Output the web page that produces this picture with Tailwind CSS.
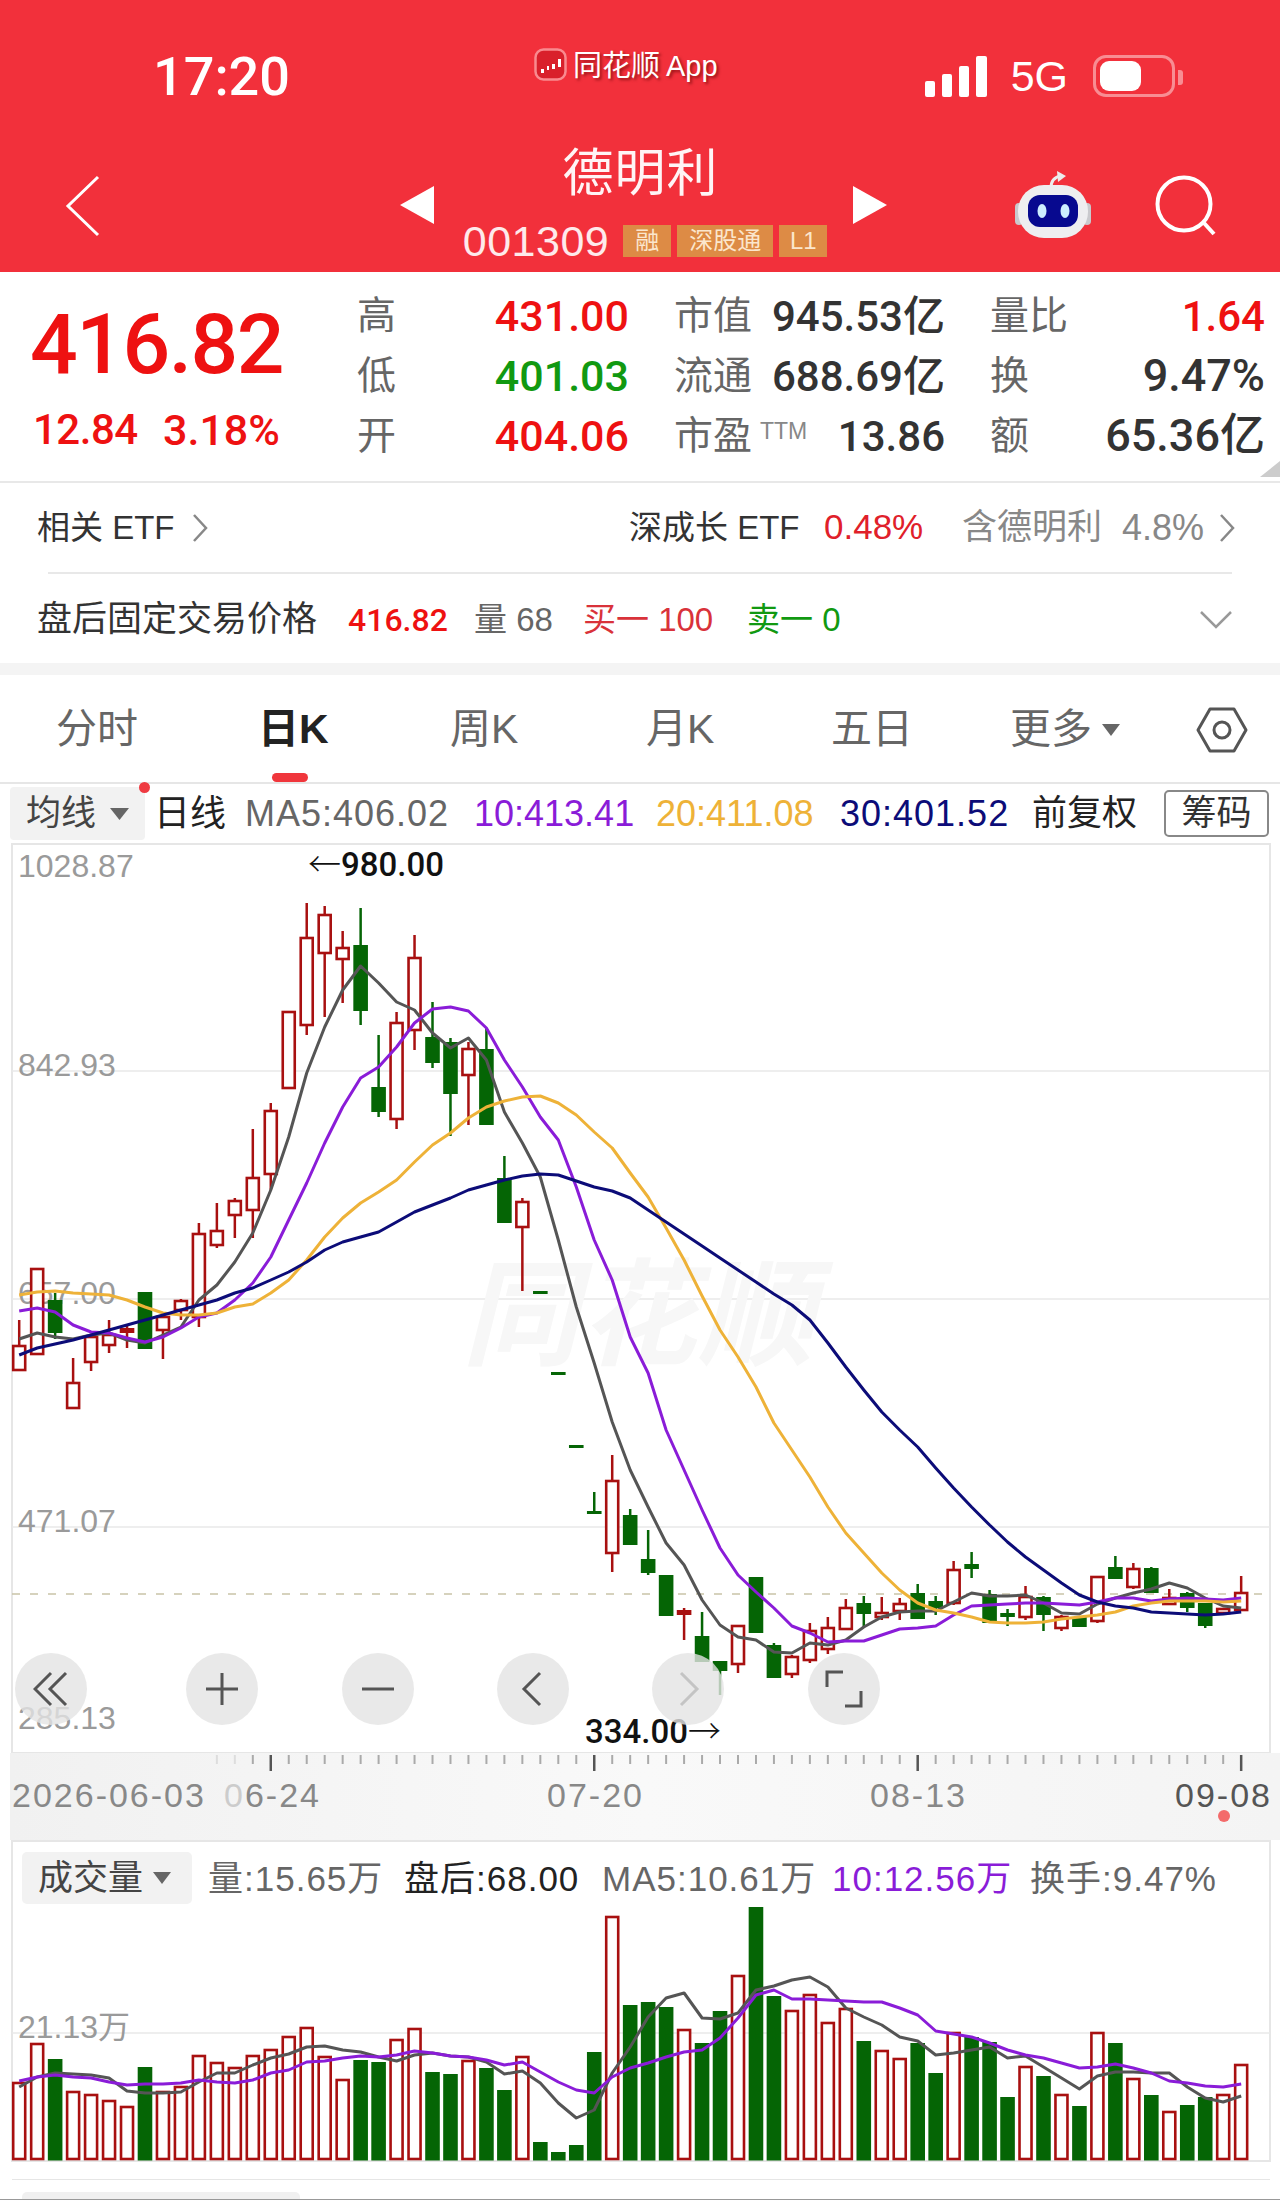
<!DOCTYPE html>
<html lang="zh-CN">
<head>
  <meta charset="UTF-8" />
  <meta name="viewport" content="width=device-width, initial-scale=1.0" />
  <title>德明利 001309</title>
  <script src="https://cdn.jsdelivr.net/npm/@tailwindcss/browser@4"></script>
</head>
<body class="w-[1280px] bg-white text-[#333] [font-family:'Liberation_Sans','Noto_Sans_CJK_SC',sans-serif]">

  <!-- Red header -->
  <header class="h-[272px] bg-[#f2303b] text-white">
    <div class="flex h-[140px] items-start">
      <div class="ml-[153px] mt-[50px] w-[140px] text-[54px] leading-[54px] font-medium [font-family:'Roboto','Liberation_Sans',sans-serif]">17:20</div>
      <div class="ml-[241px] mt-[48px] flex h-[32px] items-center">
        <svg width="33" height="33" viewBox="0 0 33 33">
          <rect x="1.5" y="1.5" width="30" height="30" rx="8" fill="#d9202b" stroke="#f98a8f" stroke-width="2.5"/>
          <path d="M7 21h3v4H7zM13 18h2v4h-2zM18 16h3v5h-3zM24 11h3v8h-3z" fill="#fff"/>
        </svg>
        <span class="ml-[6px] mt-[4px] text-[29px] leading-[32px] whitespace-nowrap [text-shadow:2px_2px_3px_rgba(90,0,0,.6)]">同花顺</span>
        <span class="ml-[6px] mt-[4px] text-[29px] leading-[32px] [text-shadow:2px_2px_3px_rgba(90,0,0,.6)]">App</span>
      </div>
      <div class="ml-[207px] mt-[55px] flex h-[42px] items-end">
        <div class="flex items-end gap-[7px]">
          <div class="h-[16px] w-[10px] rounded-[2px] bg-white"></div>
          <div class="h-[23px] w-[10px] rounded-[2px] bg-white"></div>
          <div class="h-[31px] w-[10px] rounded-[2px] bg-white"></div>
          <div class="h-[41px] w-[11px] rounded-[2px] bg-white"></div>
        </div>
        <div class="ml-[24px] w-[58px] text-[43px] leading-[41px]">5G</div>
        <div class="ml-[24px] flex h-[42px] w-[82px] items-center rounded-[13px] border-[3px] border-white/45 pl-[4px]">
          <div class="h-[30px] w-[41px] rounded-[9px] bg-white"></div>
        </div>
        <div class="mb-[12px] ml-[3px] h-[15px] w-[5px] rounded-r-[3px] bg-white/45"></div>
      </div>
    </div>
    <div class="flex h-[132px] items-start">
      <svg class="ml-[65px] mt-[35px]" width="36" height="62" viewBox="0 0 36 62">
        <path d="M33 2 3 31l30 29" fill="none" stroke="#fff" stroke-width="3"/>
      </svg>
      <svg class="ml-[299px] mt-[46px]" width="34" height="38" viewBox="0 0 34 38"><path d="M34 0v38L0 19z" fill="#fff"/></svg>
      <div class="flex w-[419px] flex-col items-center">
        <div class="mr-[6px] mt-[7px] text-[51px] leading-[54px] tracking-[1px] text-white/95">德明利</div>
        <div class="ml-[3px] mt-[24px] flex h-[32px] items-center">
          <span class="mr-[14px] text-[43px] leading-[32px] tracking-[.5px] text-white/90">001309</span>
          <span class="flex h-[32px] w-[48px] items-center justify-center bg-[#dd8b45] text-[24px] text-[#fbe6cd]">融</span>
          <span class="ml-[6px] flex h-[32px] w-[96px] items-center justify-center bg-[#dd8b45] text-[24px] text-[#fbe6cd]">深股通</span>
          <span class="ml-[6px] flex h-[32px] w-[48px] items-center justify-center bg-[#dd8b45] text-[24px] text-[#fbe6cd]">L1</span>
        </div>
      </div>
      <svg class="mt-[46px]" width="34" height="38" viewBox="0 0 34 38"><path d="M0 0v38l34-19z" fill="#fff"/></svg>
      <svg class="ml-[128px] mt-[30px]" width="78" height="70" viewBox="0 0 78 70">
        <path d="M36 18c0-6 3-11 10-12" fill="none" stroke="#ececec" stroke-width="3"/>
        <path d="M42 1l9 5-8 6z" fill="#ececec"/>
        <rect x="0" y="33" width="8" height="22" rx="4" fill="#c9c9cd"/>
        <rect x="68" y="33" width="8" height="22" rx="4" fill="#c9c9cd"/>
        <rect x="3" y="15" width="70" height="53" rx="26" fill="#eeeef0"/>
        <rect x="13" y="25" width="50" height="32" rx="12" fill="#07098f"/>
        <ellipse cx="27" cy="41" rx="4.5" ry="7" fill="#cdeeff"/>
        <ellipse cx="50" cy="41" rx="4.5" ry="7" fill="#cdeeff"/>
      </svg>
      <svg class="ml-[62px] mt-[32px]" width="64" height="66" viewBox="0 0 64 66">
        <circle cx="29" cy="32" r="26.5" fill="none" stroke="#fff" stroke-width="4"/>
        <path d="M49 51l10 11" stroke="#fff" stroke-width="4" fill="none"/>
      </svg>
    </div>
  </header>

  <!-- Quote -->
  <section class="relative flex h-[211px] border-b-2 border-[#e8e8e8]">
    <div class="ml-[30px] w-[327px]">
      <div class="mt-[34px] text-[84px] leading-[78px] tracking-[-1.5px] font-medium text-[#ee1111] [font-family:'Roboto','Liberation_Sans',sans-serif]">416.82</div>
      <div class="mt-[26px] flex text-[42px] leading-[40px] font-medium text-[#ee1111] [font-family:'Roboto','Liberation_Sans',sans-serif]">
        <span class="ml-[3px] w-[130px] tracking-[-.5px]">12.84</span><span class="text-[43px]">3.18%</span>
      </div>
    </div>
    <div class="mt-[14px] grid h-[180px] grid-cols-[272px_271px_275px] grid-rows-[60px_60px_60px] gap-x-[45px] text-[39px] text-[#666]">
      <div class="flex items-center justify-between"><span>高</span><span class="text-[43px] font-medium text-[#ee1111] [font-family:'Roboto',sans-serif]">431.00</span></div>
      <div class="flex items-center justify-between"><span>市值</span><span class="text-[42px] font-medium text-[#333] [font-family:'Roboto','Noto_Sans_CJK_SC',sans-serif]">945.53亿</span></div>
      <div class="flex items-center justify-between"><span>量比</span><span class="text-[42px] font-medium text-[#ee1111] [font-family:'Roboto',sans-serif]">1.64</span></div>
      <div class="flex items-center justify-between"><span>低</span><span class="text-[43px] font-medium text-[#119911] [font-family:'Roboto',sans-serif]">401.03</span></div>
      <div class="flex items-center justify-between"><span>流通</span><span class="text-[42px] font-medium text-[#333] [font-family:'Roboto','Noto_Sans_CJK_SC',sans-serif]">688.69亿</span></div>
      <div class="flex items-center justify-between"><span>换</span><span class="text-[45px] font-medium text-[#333] [font-family:'Roboto',sans-serif]">9.47%</span></div>
      <div class="flex items-center justify-between"><span>开</span><span class="text-[43px] font-medium text-[#ee1111] [font-family:'Roboto',sans-serif]">404.06</span></div>
      <div class="flex items-center justify-between"><span>市盈<span class="relative top-[-10px] ml-[8px] text-[23px] font-light text-[#888]">TTM</span></span><span class="text-[42px] font-medium text-[#333] [font-family:'Roboto',sans-serif]">13.86</span></div>
      <div class="flex items-center justify-between"><span>额</span><span class="text-[45px] font-medium text-[#333] [font-family:'Roboto','Noto_Sans_CJK_SC',sans-serif]">65.36亿</span></div>
    </div>
    <svg class="absolute bottom-[4px] right-0" width="20" height="16" viewBox="0 0 20 16"><path d="M20 0v16H0z" fill="#ccc"/></svg>
  </section>

  <!-- ETF row -->
  <section class="flex h-[89px] items-center text-[33px]">
    <span class="ml-[37px] w-[140px] whitespace-nowrap">相关 ETF</span>
    <svg class="ml-[15px]" width="16" height="30" viewBox="0 0 16 30"><path d="M2 2l12 13L2 28" fill="none" stroke="#888" stroke-width="2.5"/></svg>
    <span class="ml-[421px] w-[177px] whitespace-nowrap">深成长 ETF</span>
    <span class="ml-[18px] w-[100px] text-[35px] text-[#e0202a]">0.48%</span>
    <span class="ml-[38px] w-[142px] whitespace-nowrap text-[35px] text-[#888]">含德明利</span>
    <span class="ml-[18px] w-[86px] text-[36px] text-[#888]">4.8%</span>
    <svg class="ml-[11px]" width="16" height="30" viewBox="0 0 16 30"><path d="M2 2l12 13L2 28" fill="none" stroke="#888" stroke-width="2.5"/></svg>
  </section>
  <div class="mx-[48px] h-[2px] bg-[#e8e8e8]"></div>

  <!-- After-hours row -->
  <section class="flex h-[85px] items-center pt-[6px] text-[33px]">
    <span class="ml-[37px] w-[284px] whitespace-nowrap text-[35px]">盘后固定交易价格</span>
    <span class="ml-[27px] w-[100px] text-[32px] font-medium text-[#ee1111] [font-family:'Roboto',sans-serif]">416.82</span>
    <span class="ml-[26px] w-[82px] whitespace-nowrap text-[#666]">量 68</span>
    <span class="ml-[27px] w-[136px] whitespace-nowrap text-[#d9323a]">买一 100</span>
    <span class="ml-[28px] w-[100px] whitespace-nowrap text-[#119911]">卖一 0</span>
    <svg class="ml-[353px]" width="32" height="18" viewBox="0 0 32 18"><path d="M1 1l15 15L31 1" fill="none" stroke="#999" stroke-width="2.5"/></svg>
  </section>
  <div class="mt-[4px] h-[12px] bg-[#f4f4f4]"></div>

  <!-- Period tabs -->
  <nav class="relative flex h-[109px] items-center whitespace-nowrap border-b-2 border-[#e6e6e6] pt-[3px] text-[41px] text-[#666]">
    <span class="ml-[56px] w-[82px]">分时</span>
    <span class="ml-[120px] w-[70px] font-bold text-[#222]">日K</span>
    <span class="ml-[122px] w-[70px]">周K</span>
    <span class="ml-[126px] w-[70px]">月K</span>
    <span class="ml-[115px] w-[82px]">五日</span>
    <span class="ml-[97px] w-[82px]">更多</span>
    <svg class="ml-[10px]" width="18" height="12" viewBox="0 0 18 12"><path d="M0 0h18L9 12z" fill="#666"/></svg>
    <svg class="ml-[76px]" width="52" height="46" viewBox="0 0 52 46">
      <path d="M14 2h24l12 21-12 21H14L2 23z" fill="none" stroke="#555" stroke-width="3" stroke-linejoin="round"/>
      <circle cx="26" cy="23" r="8" fill="none" stroke="#555" stroke-width="3"/>
    </svg>
    <div class="absolute bottom-0 left-[272px] h-[9px] w-[36px] rounded-full bg-[#f0363c]"></div>
  </nav>

  <!-- MA legend -->
  <section class="relative flex h-[59px] items-center text-[36px] whitespace-nowrap">
    <div class="ml-[10px] flex h-[53px] w-[135px] items-center rounded-[4px] bg-[#f2f2f2] pl-[16px] text-[#444]">
      <span class="w-[68px] text-[35px]">均线</span>
      <svg class="ml-[16px]" width="19" height="12" viewBox="0 0 19 12"><path d="M0 0h19L9.5 12z" fill="#666"/></svg>
    </div>
    <div class="absolute left-[139px] top-[-2px] h-[11px] w-[11px] rounded-full bg-[#ef3b42]"></div>
    <span class="ml-[9px] w-[68px] text-[#222]">日线</span>
    <span class="ml-[23px] w-[210px] text-[#666] tracking-[1px]">MA5:406.02</span>
    <span class="ml-[19px] w-[162px] text-[#8a1cd8]">10:413.41</span>
    <span class="ml-[20px] w-[162px] text-[#eeb238]">20:411.08</span>
    <span class="ml-[22px] w-[172px] text-[#0c0c78] tracking-[1px]">30:401.52</span>
    <span class="ml-[20px] w-[108px] text-[35px] text-[#222]">前复权</span>
    <div class="ml-[24px] flex h-[47px] w-[105px] items-center justify-center rounded-[5px] border-2 border-[#888] text-[35px] text-[#333]">筹码</div>
  </section>

  <!-- Candle chart -->
  <section class="relative h-[910px]">
    <svg id="kline" class="block" width="1280" height="910" viewBox="0 843 1280 910"></svg>
    <div class="absolute left-[15px] top-[810px] flex h-[72px] w-[72px] items-center justify-center rounded-full bg-[#e4e4e4]/80">
      <svg width="36" height="36" viewBox="0 0 36 36"><path d="M18 2 2 18l16 16M33 2 17 18l16 16" fill="none" stroke="#555" stroke-width="3"/></svg>
    </div>
    <div class="absolute left-[186px] top-[810px] flex h-[72px] w-[72px] items-center justify-center rounded-full bg-[#e4e4e4]/80">
      <svg width="36" height="36" viewBox="0 0 36 36"><path d="M18 2v32M2 18h32" fill="none" stroke="#555" stroke-width="3"/></svg>
    </div>
    <div class="absolute left-[342px] top-[810px] flex h-[72px] w-[72px] items-center justify-center rounded-full bg-[#e4e4e4]/80">
      <svg width="36" height="36" viewBox="0 0 36 36"><path d="M2 18h32" fill="none" stroke="#555" stroke-width="3"/></svg>
    </div>
    <div class="absolute left-[497px] top-[810px] flex h-[72px] w-[72px] items-center justify-center rounded-full bg-[#e4e4e4]/80">
      <svg width="36" height="36" viewBox="0 0 36 36"><path d="M25 2 9 18l16 16" fill="none" stroke="#555" stroke-width="3"/></svg>
    </div>
    <div class="absolute left-[652px] top-[810px] flex h-[72px] w-[72px] items-center justify-center rounded-full bg-[#e4e4e4]/80">
      <svg width="36" height="36" viewBox="0 0 36 36"><path d="m11 2 16 16-16 16" fill="none" stroke="#c4c4c4" stroke-width="3"/></svg>
    </div>
    <div class="absolute left-[808px] top-[810px] flex h-[72px] w-[72px] items-center justify-center rounded-full bg-[#e4e4e4]/80">
      <svg width="38" height="38" viewBox="0 0 38 38"><path d="M2 17V2h16M36 21v15H20" fill="none" stroke="#555" stroke-width="3"/></svg>
    </div>
  </section>

  <!-- Date axis -->
  <section class="relative ml-[10px] h-[87px] bg-gradient-to-r from-[#f1f1f1] via-[#f9f9f9] to-[#f4f4f4]">
    <svg id="ticks" class="absolute left-[-10px] top-0" width="1280" height="20" viewBox="0 1753 1280 20"></svg>
    <div class="flex h-[84px] items-center text-[34px] tracking-[2px] text-[#888] whitespace-nowrap">
      <span class="ml-[2px] w-[194px]">2026-06-03</span>
      <span class="ml-[18px] w-[94px]"><span class="text-[#ccc]">0</span>6-24</span>
      <span class="ml-[229px] w-[94px]">07-20</span>
      <span class="ml-[229px] w-[94px]">08-13</span>
      <span class="ml-[211px] w-[96px] text-[#555]">09-08</span>
    </div>
    <div class="absolute left-[1208px] top-[57px] h-[12px] w-[12px] rounded-full bg-[#f36b6b]"></div>
  </section>

  <!-- Volume panel -->
  <section class="relative h-[340px]">
    <svg id="volume" class="absolute left-0 top-0" width="1280" height="340" viewBox="0 1840 1280 340"></svg>
    <div class="relative flex h-[64px] items-end text-[35px] whitespace-nowrap">
      <div class="ml-[22px] flex h-[52px] w-[170px] items-center rounded-[5px] bg-[#f2f2f2] pl-[16px] text-[#444]">
        <span class="w-[105px]">成交量</span>
        <svg class="ml-[10px]" width="18" height="12" viewBox="0 0 18 12"><path d="M0 0h18L9 12z" fill="#666"/></svg>
      </div>
      <div class="ml-[16px] flex h-[52px] items-center pt-[3px] tracking-[1px]">
        <span class="w-[176px] text-[#666]">量:15.65万</span>
        <span class="ml-[20px] w-[176px] text-[#222]">盘后:68.00</span>
        <span class="ml-[22px] w-[207px] text-[#666]">MA5:10.61万</span>
        <span class="ml-[23px] w-[177px] text-[#8a1cd8]">10:12.56万</span>
        <span class="ml-[21px] w-[185px] text-[#666]">换手:9.47%</span>
      </div>
    </div>
  </section>

  <!-- Start of the next panel, cut off by the window -->
  <section class="relative h-[20px] overflow-hidden">
    <div class="absolute left-[22px] top-[12px] h-[8px] w-[278px] rounded-t-[5px] bg-[#f0f0f0]"></div>
    <div class="absolute bottom-0 left-0 h-[1px] w-full bg-[#999]"></div>
  </section>

  <script>
    const NS = 'http://www.w3.org/2000/svg';
    const RED = '#a81010', GREEN = '#056505';
    const xAt = i => 19.2 + 17.97 * i;

    function add(svg, tag, attrs, text) {
      const el = document.createElementNS(NS, tag);
      Object.entries(attrs).forEach(([k, v]) => el.setAttribute(k, v));
      if (text) el.textContent = text;
      svg.appendChild(el);
      return el;
    }

    // [colour, high, body top, body bottom, low]
    const candles = [
      ['r',1320,1346,1370,1371],['r',1269,1269,1354,1354],['g',1293,1300,1333,1339],['r',1358,1383,1408,1408],
      ['r',1337,1337,1362,1371],['r',1320,1335,1345,1353],['f',1324,1328,1333,1348],['g',1292,1292,1349,1349],
      ['r',1317,1317,1330,1359],['r',1299,1301,1310,1320],['r',1223,1234,1317,1327],['r',1203,1231,1245,1248],
      ['r',1198,1201,1215,1238],['r',1129,1178,1210,1238],['r',1103,1111,1174,1190],['r',1012,1012,1088,1088],
      ['r',903,938,1025,1035],['r',906,915,953,1017],['r',931,948,959,1003],['g',908,945,1011,1025],
      ['g',1035,1087,1112,1117],['r',1012,1023,1119,1129],['r',935,958,1030,1050],['g',1002,1037,1063,1068],
      ['g',1038,1042,1094,1136],['r',1042,1049,1075,1125],['g',1028,1049,1125,1125],['g',1156,1178,1223,1223],
      ['r',1198,1202,1227,1291],['g',1291,1291,1294,1294],['g',1372,1372,1375,1375],['g',1445,1445,1448,1448],
      ['g',1492,1511,1514,1514],['r',1455,1481,1553,1572],['g',1509,1515,1545,1545],['g',1530,1559,1573,1575],
      ['g',1575,1575,1616,1616],['f',1608,1610,1615,1640],['g',1612,1636,1662,1662],['g',1661,1661,1671,1695],
      ['r',1626,1626,1664,1673],['g',1577,1577,1633,1633],['g',1643,1645,1678,1678],['r',1655,1657,1674,1678],
      ['r',1623,1631,1660,1663],['r',1617,1628,1649,1654],['r',1599,1608,1629,1629],['g',1596,1603,1614,1628],
      ['r',1597,1613,1617,1620],['r',1598,1604,1611,1620],['g',1584,1593,1619,1619],['g',1596,1601,1608,1615],
      ['r',1561,1570,1603,1605],['g',1552,1564,1569,1578],['g',1590,1594,1623,1623],['g',1609,1613,1617,1626],
      ['r',1586,1597,1617,1620],['g',1596,1597,1615,1631],['r',1615,1617,1628,1631],['g',1617,1617,1627,1627],
      ['r',1577,1577,1621,1623],['g',1556,1567,1579,1579],['r',1563,1569,1587,1589],['g',1567,1568,1593,1593],
      ['r',1589,1598,1604,1604],['g',1592,1593,1608,1612],['g',1603,1603,1626,1628],['r',1609,1609,1613,1613],
      ['r',1576,1593,1610,1610]
    ];

    const ma5 = [1339,1333,1337,1339,1335,1333,1340,1343,1335,1327,1300,1285,1262,1233,1190,1137,1073,1027,990,966,983,1002,1010,1033,1048,1038,1060,1112,1143,1177,1240,1307,1363,1422,1470,1507,1543,1565,1600,1625,1637,1640,1652,1653,1643,1645,1640,1627,1617,1612,1611,1611,1602,1593,1596,1596,1595,1603,1613,1614,1604,1598,1593,1589,1583,1588,1598,1606,1608];
    const ma10 = [1311,1308,1312,1325,1332,1333,1338,1342,1337,1328,1317,1313,1300,1283,1257,1220,1183,1143,1107,1078,1067,1047,1023,1009,1007,1011,1028,1060,1087,1117,1140,1187,1240,1280,1337,1373,1430,1470,1510,1548,1575,1592,1608,1626,1633,1642,1641,1641,1635,1629,1628,1626,1615,1606,1605,1604,1603,1603,1604,1605,1602,1598,1598,1601,1599,1598,1599,1600,1598];
    const ma20 = [1295,1292,1291,1293,1294,1295,1300,1307,1313,1315,1315,1313,1307,1304,1293,1280,1260,1237,1218,1203,1192,1180,1162,1145,1133,1118,1107,1101,1097,1096,1103,1115,1132,1148,1173,1197,1228,1260,1296,1330,1357,1387,1423,1450,1477,1507,1533,1553,1573,1590,1603,1610,1613,1617,1622,1623,1623,1622,1619,1617,1615,1612,1606,1603,1601,1601,1601,1602,1601];
    const ma30 = [1355,1348,1344,1340,1335,1330,1325,1320,1315,1310,1305,1300,1293,1288,1280,1272,1262,1250,1242,1237,1232,1222,1212,1205,1198,1190,1185,1180,1176,1174,1175,1181,1187,1191,1198,1210,1222,1234,1246,1258,1270,1282,1294,1305,1320,1343,1367,1390,1412,1430,1447,1468,1488,1507,1525,1542,1557,1570,1583,1595,1602,1606,1608,1612,1613,1614,1615,1614,1612];

    const vols = [2083,2044,2059,2092,2095,2101,2107,2067,2092,2087,2056,2063,2068,2056,2050,2037,2028,2057,2080,2060,2062,2040,2029,2072,2074,2061,2068,2090,2057,2142,2152,2145,2052,1917,2005,2002,2007,2030,2043,2011,1976,1907,1996,2011,1995,2023,2009,2041,2051,2059,2043,2073,2033,2037,2042,2097,2067,2076,2095,2106,2033,2043,2079,2095,2112,2105,2097,2095,2065];
    const volKind = ['rrgrrrrg','rrrrrrrrrrr','gg','rr','gg','r','gg','r','gggg','r','ggg','r','gg','r','gg','rrrr','g','rr','gg','r','ggg','r','g','r','g','r','g','r','g','r','gg','rr'].join('');
    const vma5 = [2087,2077,2073,2074,2075,2078,2091,2093,2093,2092,2082,2073,2073,2065,2058,2054,2047,2046,2050,2052,2057,2061,2055,2053,2056,2057,2062,2074,2071,2083,2103,2118,2110,2073,2047,2017,1998,1993,2018,2019,2013,1990,1986,1980,1977,1987,2008,2017,2025,2037,2041,2055,2053,2050,2047,2058,2056,2067,2078,2089,2076,2072,2072,2073,2073,2087,2098,2102,2096];
    const vma10 = [2081,2077,2075,2077,2078,2082,2085,2084,2084,2083,2080,2082,2083,2080,2073,2070,2062,2061,2058,2056,2057,2055,2051,2053,2056,2057,2060,2065,2062,2072,2082,2090,2093,2077,2068,2063,2057,2052,2050,2038,2018,1995,1990,1999,1999,2000,2001,2002,2002,2008,2015,2031,2034,2037,2043,2050,2055,2058,2063,2068,2067,2064,2068,2073,2081,2083,2086,2087,2084];

    function polyline(svg, ys, stroke) {
      add(svg, 'polyline', {
        points: ys.map((y, i) => xAt(i).toFixed(1) + ',' + y).join(' '),
        fill: 'none', stroke, 'stroke-width': 3, 'stroke-linejoin': 'round'
      });
    }

    // label with a long thin arrow from the CJK font and medium-weight digits
    function extreme(svg, x, y, parts) {
      const el = add(svg, 'text', { x, y, fill: '#111', 'font-size': 33 });
      parts.forEach(([s, family, weight]) => {
        const span = add(el, 'tspan', { 'font-family': family, 'font-weight': weight });
        span.textContent = s;
      });
    }

    // main chart
    const k = document.getElementById('kline');
    add(k, 'rect', { x: 12, y: 844, width: 1258, height: 909, fill: '#fff', stroke: '#e6e6e6', 'stroke-width': 2 });
    [1071, 1299, 1527].forEach(y => add(k, 'line', { x1: 12, x2: 1270, y1: y, y2: y, stroke: '#e8e8e8', 'stroke-width': 1.5 }));
    add(k, 'line', { x1: 12, x2: 1270, y1: 1594, y2: 1594, stroke: '#c9c4a8', 'stroke-width': 1.5, 'stroke-dasharray': '8 10' });

    // watermark sits under everything else
    add(k, 'text', { x: 462, y: 1356, 'font-size': 116, 'font-weight': 700, 'font-style': 'italic', fill: '#f7f7f7', 'letter-spacing': 2 }, '同花顺');

    [['1028.87', 18, 877], ['842.93', 18, 1076], ['657.00', 18, 1304], ['471.07', 18, 1532], ['285.13', 18, 1729]].forEach(([t, x, y]) =>
      add(k, 'text', { x, y, 'font-size': 32, fill: '#9a9a9a' }, t));

    candles.forEach(([c, hi, top, bot, lo], i) => {
      const x = xAt(i);
      const col = c === 'g' ? GREEN : RED;
      add(k, 'line', { x1: x, x2: x, y1: hi, y2: lo, stroke: col, 'stroke-width': 2.5 });
      if (c === 'r') {
        add(k, 'rect', { x: x - 6, y: top, width: 12, height: bot - top, fill: '#fff', stroke: col, 'stroke-width': 2.6 });
      } else {
        add(k, 'rect', { x: x - 7.3, y: top, width: 14.6, height: bot - top, fill: col });
      }
    });

    polyline(k, ma5, '#555');
    polyline(k, ma10, '#8a1cd8');
    polyline(k, ma20, '#eeb238');
    polyline(k, ma30, '#0c0c78');

    const CJK = "'Noto Sans CJK SC',sans-serif", NUM = "'Roboto',sans-serif";
    extreme(k, 308, 876, [['←', CJK, 300], ['980.00', NUM, 500]]);
    extreme(k, 585, 1743, [['334.00', NUM, 500], ['→', CJK, 300]]);

    // axis ticks
    const t = document.getElementById('ticks');
    for (let i = 11; i < candles.length; i++) {
      const big = i === 14 || i === 32 || i === 50 || i === 68;
      const col = big ? '#555' : i < 13 ? '#ddd' : '#aaa';
      add(t, 'line', { x1: xAt(i), x2: xAt(i), y1: 1755, y2: big ? 1771 : 1764, stroke: col, 'stroke-width': big ? 2.5 : 2 });
    }

    // volume chart
    const v = document.getElementById('volume');
    add(v, 'rect', { x: 12, y: 1841, width: 1258, height: 320, fill: '#fff', stroke: '#e6e6e6', 'stroke-width': 2 });
    add(v, 'line', { x1: 12, x2: 1270, y1: 2033, y2: 2033, stroke: '#e8e8e8', 'stroke-width': 1.5 });
    add(v, 'line', { x1: 12, x2: 1270, y1: 2180, y2: 2180, stroke: '#e6e6e6', 'stroke-width': 2 });
    add(v, 'text', { x: 18, y: 2038, 'font-size': 32, fill: '#9a9a9a', 'font-family': "'Liberation Sans','Noto Sans CJK SC',sans-serif" }, '21.13万');
    vols.forEach((top, i) => {
      const x = xAt(i);
      if (volKind[i] === 'r') {
        add(v, 'rect', { x: x - 6, y: top, width: 12, height: 2159 - top, fill: '#fff', stroke: RED, 'stroke-width': 2.6 });
      } else {
        add(v, 'rect', { x: x - 7.3, y: top, width: 14.6, height: 2160.5 - top, fill: GREEN });
      }
    });
    polyline(v, vma5, '#555');
    polyline(v, vma10, '#8a1cd8');
  </script>
</body>
</html>
